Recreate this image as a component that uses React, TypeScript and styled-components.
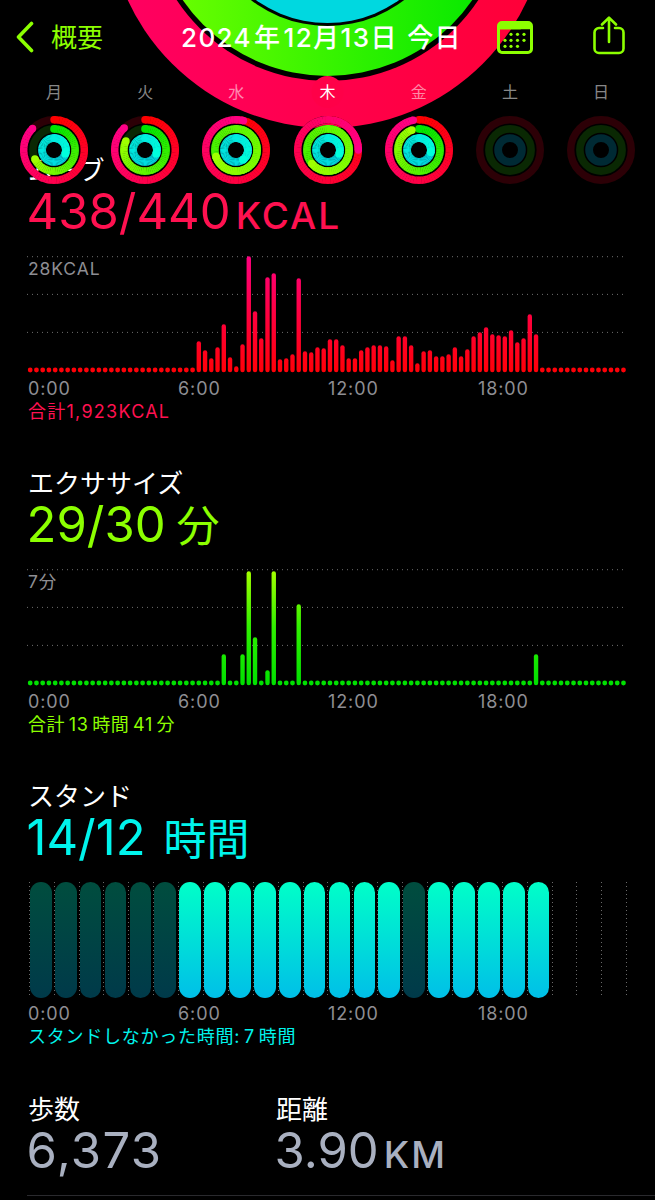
import React from "react";
import styled, { createGlobalStyle } from "styled-components";

const FONT = `Inter, "Noto Sans CJK JP", "Liberation Sans", sans-serif`;
const LIME = "#8cff00";

const Global = createGlobalStyle`
  html, body { margin: 0; padding: 0; background: #000; }
  body { font-family: ${FONT}; color: #fff; }
`;

const Page = styled.div`
  position: relative;
  width: 655px;
  height: 1200px;
  overflow: hidden;
  background: #000;
`;
const Backdrop = styled.svg`
  position: absolute;
  top: 0;
  left: 0;
`;
const Header = styled.header`
  position: relative;
  display: flex;
  align-items: center;
  height: 74px;
`;
const BackLink = styled.div`
  display: flex;
  align-items: center;
  width: 181px;
  padding-left: 16px;
  box-sizing: border-box;
  gap: 17px;
  color: ${LIME};
  font-size: 26px;
`;
const BackLabel = styled.span`
  padding-bottom: 4px;
`;
const Title = styled.div`
  width: 316px;
  padding-bottom: 4px;
  font-size: 26px;
  font-weight: 500;
  letter-spacing: 1.4px;
  white-space: nowrap;
`;
const Gap = styled.span`
  display: inline-block;
  width: ${(p: { $w: number }) => p.$w}px;
`;
const HeaderIcons = styled.div`
  display: flex;
  align-items: center;
  gap: 60px;
`;
const DayRow = styled.div`
  position: relative;
  display: grid;
  grid-template-columns: repeat(7, 91.2px);
  padding-left: 8.4px;
  height: 34px;
  align-items: center;
`;
const Day = styled.div<{ $active?: boolean }>`
  text-align: center;
  font-size: 16px;
  color: ${(p) => (p.$active ? "#fff" : "rgba(255,255,255,0.55)")};
`;
const RingRow = styled.div`
  position: relative;
  z-index: 2;
  display: grid;
  grid-template-columns: repeat(7, 91.2px);
  justify-items: center;
  padding-left: 8.4px;
  margin-top: 8px;
  margin-bottom: -29px;
`;
const Section = styled.section`
  position: relative;
  height: 313px;
  padding-left: 28px;
  box-sizing: border-box;
`;
const SectionTitle = styled.div`
  font-size: 26px;
  line-height: 32px;
  height: 32px;
  white-space: nowrap;
`;
const Value = styled.div<{ $color: string }>`
  color: ${(p) => p.$color};
  font-size: 49px;
  line-height: 50px;
  height: 50px;
  margin-left: -1.5px;
  white-space: nowrap;
`;
const Unit = styled.span`
  font-size: 37px;
  font-weight: 500;
  letter-spacing: 2px;
  margin-left: 5px;
`;
const JpUnit = styled.span<{ $gap: number }>`
  font-size: 43px;
  margin-left: ${(p) => p.$gap}px;
`;
const ChartWrap = styled.div`
  position: relative;
  margin-top: 19px;
  height: 122px;
`;
const ChartSvg = styled.svg`
  display: block;
  overflow: visible;
`;
const ScaleLabel = styled.div`
  position: absolute;
  left: 0;
  top: 2px;
  font-size: 17.5px;
  line-height: 22px;
  letter-spacing: 0.9px;
  color: #8e8e93;
`;
const Axis = styled.div`
  display: grid;
  grid-template-columns: repeat(4, 150px);
  font-size: 18px;
  line-height: 22px;
  letter-spacing: 0.9px;
  color: #8e8e93;
`;
const Total = styled.div<{ $color: string; $ls: number }>`
  font-size: 18px;
  line-height: 24px;
  letter-spacing: ${(p) => p.$ls}px;
  word-spacing: -2px;
  color: ${(p) => p.$color};
  white-space: nowrap;
`;
const StandGrid = styled.div`
  display: grid;
  grid-template-columns: repeat(24, 24.9px) 1px;
  height: 116px;
  margin-left: 0.8px;
`;
const StandCell = styled.div`
  background-image: linear-gradient(#6a6a6a 1px, transparent 1px);
  background-size: 1px 4px;
  background-repeat: repeat-y;
  padding-left: 1.2px;
`;
const StandBar = styled.div<{ $on: boolean }>`
  width: 21.7px;
  height: 116px;
  border-radius: 11px;
  background: ${(p) =>
    p.$on
      ? "linear-gradient(#00ffc8, #00bfe8)"
      : "linear-gradient(#004d3e, #003a4a)"};
`;
const StandWrap = styled.div`
  margin-top: 19px;
  height: 121px;
`;
const Stats = styled.div`
  display: grid;
  grid-template-columns: 248px 1fr;
  padding-left: 28px;
  height: 101px;
  box-sizing: border-box;
`;
const StatValue = styled.div`
  color: #a9b0c0;
  font-size: 49px;
  line-height: 50px;
  margin-left: -1.5px;
  white-space: nowrap;
`;
const Count = styled.span`
  letter-spacing: 1.4px;
`;
const StatsLine = styled.div`
  margin-left: 27px;
  height: 1px;
  background: #2a2a2e;
`;

function hex(c: string) {
  return [1, 3, 5].map((i) => parseInt(c.slice(i, i + 2), 16));
}
function mix(a: string, b: string, t: number) {
  const x = hex(a), y = hex(b);
  const v = x.map((n, i) => Math.round(n + (y[i] - n) * t));
  return `rgb(${v[0]},${v[1]},${v[2]})`;
}
function pt(r: number, deg: number) {
  const a = (deg * Math.PI) / 180;
  return [34 + r * Math.sin(a), 34 - r * Math.cos(a)];
}

function Arc({ r, w, frac, from, to, track }: { r: number; w: number; frac: number; from: string; to: string; track: string }) {
  const total = frac * 360;
  const segs: React.ReactNode[] = [];
  const step = 5;
  for (let d = 0; d < total; d += step) {
    const e = Math.min(d + step + 0.6, total);
    const [x1, y1] = pt(r, d);
    const [x2, y2] = pt(r, e);
    segs.push(
      <path key={d} d={`M${x1} ${y1}A${r} ${r} 0 0 1 ${x2} ${y2}`} fill="none" stroke={mix(from, to, d / total)} strokeWidth={w} />
    );
  }
  const [sx, sy] = pt(r, 0);
  const [ex, ey] = pt(r, total);
  return (
    <>
      <circle cx={34} cy={34} r={r} fill="none" stroke={track} strokeWidth={w} />
      {frac > 0 && <circle cx={sx} cy={sy} r={w / 2} fill={from} />}
      {segs}
      {frac > 0 && <circle cx={ex} cy={ey} r={w / 2} fill={to} />}
    </>
  );
}

function Ring({ red, green, cyan }: { red: number; green: number; cyan: number }) {
  return (
    <svg width={68} height={68} viewBox="0 0 68 68">
      <Arc r={30.3} w={7.4} frac={red} from="#ff0000" to="#ff0088" track="#2c0006" />
      <Arc r={21.1} w={7.6} frac={green} from="#00e800" to="#a0ff00" track="#0a2803" />
      <Arc r={11.9} w={7.8} frac={cyan} from="#00c8e4" to="#00ffdc" track="#002a34" />
    </svg>
  );
}

const rings = [
  { d: "月", red: 0.875, green: 0.68, cyan: 1.3 },
  { d: "火", red: 0.88, green: 0.82, cyan: 1.3 },
  { d: "水", red: 1.04, green: 1.7, cyan: 1.4 },
  { d: "木", red: 1.25, green: 1.64, cyan: 1.3, active: true },
  { d: "金", red: 0.97, green: 0.945, cyan: 1.28 },
  { d: "土", red: 0, green: 0, cyan: 0 },
  { d: "日", red: 0, green: 0, cyan: 0 },
];

const redBars: Record<number, number> = {
  27: 31, 28: 22, 29: 14, 30: 25, 31: 48, 32: 15, 33: 6, 34: 28, 35: 116, 36: 61, 37: 34, 38: 95, 39: 99,
  40: 13, 41: 14, 42: 18, 43: 94, 44: 21, 45: 20, 46: 25, 47: 24, 48: 33, 49: 33, 50: 27, 51: 14, 52: 14,
  53: 22, 54: 25, 55: 27, 56: 27, 57: 26, 58: 12, 59: 36, 60: 36, 61: 27, 62: 9, 63: 21, 64: 22, 65: 16,
  66: 16, 67: 18, 68: 25, 69: 16, 70: 23, 71: 36, 72: 40, 73: 45, 74: 38, 75: 37, 76: 36, 77: 42, 78: 30,
  79: 34, 80: 58, 81: 38,
};
const greenBars: Record<number, number> = { 31: 31, 34: 31, 35: 114, 36: 48, 38: 15, 39: 114, 43: 81, 81: 31 };

function Chart({ id, bars, stops }: { id: string; bars: Record<number, number>; stops: string[] }) {
  const items = Array.from({ length: 96 }, (_, i) => i);
  return (
    <ChartSvg width={600} height={120} viewBox="0 0 600 120">
      <defs>
        <linearGradient id={id} gradientUnits="userSpaceOnUse" x1="0" y1="0" x2="0" y2="116">
          <stop offset="0" stopColor={stops[0]} />
          <stop offset="0.5" stopColor={stops[1]} />
          <stop offset="1" stopColor={stops[2]} />
        </linearGradient>
      </defs>
      {[0.7, 38.4, 76.4].map((y) => (
        <line key={y} x1={-1} x2={599} y1={y} y2={y} stroke="#6e6e6e" strokeWidth={1} strokeDasharray="1 4" />
      ))}
      {items.map((i) => {
        const x = 2.2 + 6.245 * i;
        const h = bars[i];
        return h ? (
          <rect key={i} x={x - 2.2} y={116.3 - h} width={4.4} height={h} rx={2.2} fill={`url(#${id})`} />
        ) : (
          <circle key={i} cx={x} cy={114} r={2.4} fill={stops[2]} />
        );
      })}
    </ChartSvg>
  );
}

function AxisLabels() {
  return (
    <Axis>
      <span>0:00</span>
      <span>6:00</span>
      <span>12:00</span>
      <span>18:00</span>
    </Axis>
  );
}

const dimHours = [0, 1, 2, 3, 4, 5, 15];

export default function App() {
  return (
    <Page>
      <Global />
      <Backdrop width={655} height={135} viewBox="0 0 655 135">
        <defs>
          <linearGradient id="bigRed" x1="0" x2="1" y1="0" y2="0">
            <stop offset="0" stopColor="#ff0062" />
            <stop offset="1" stopColor="#ff0036" />
          </linearGradient>
          <linearGradient id="bigGreen" x1="0" x2="1" y1="0" y2="0">
            <stop offset="0" stopColor="#70ff00" />
            <stop offset="1" stopColor="#00e800" />
          </linearGradient>
        </defs>
        <circle cx={327.5} cy={-92} r={220} fill="url(#bigRed)" />
        <circle cx={327.5} cy={-100} r={181} fill="#000" />
        <circle cx={327.5} cy={-100} r={176} fill="url(#bigGreen)" />
        <circle cx={327.5} cy={-100} r={126} fill="#000" />
        <circle cx={327.5} cy={-100} r={123} fill="#00d8e0" />
        <circle cx={327.5} cy={92} r={16} fill="#ff0048" />
      </Backdrop>
      <Header>
        <BackLink>
          <svg width={18} height={32} viewBox="0 0 18 32">
            <path d="M15.5 2.5 2.5 16l13 13.5" fill="none" stroke={LIME} strokeWidth={3.6} strokeLinecap="round" strokeLinejoin="round" />
          </svg>
          <BackLabel>概要</BackLabel>
        </BackLink>
        <Title>
          2024<Gap $w={2} />年<Gap $w={2} />12月13日<Gap $w={1} /> 今日
        </Title>
        <HeaderIcons>
          <svg width={36} height={33} viewBox="0 0 36 33">
            <path
              fillRule="evenodd"
              fill={LIME}
              d="M5 0h26a5 5 0 0 1 5 5v23a5 5 0 0 1-5 5H5a5 5 0 0 1-5-5V5a5 5 0 0 1 5-5ZM3 8.5V27a3 3 0 0 0 3 3h24a3 3 0 0 0 3-3V8.5Z"
            />
            <path d="M33 8.5V27a3 3 0 0 1-3 3H6a3 3 0 0 1-2.4-1.2L24 8.5Z" fill="#000" />
            {[
              [14, 13.3], [20.5, 13.3], [27, 13.3],
              [8, 19.3], [14, 19.3], [20.5, 19.3], [27, 19.3],
              [8, 25.3], [14, 25.3], [20.5, 25.3],
            ].map(([x, y]) => (
              <circle key={`${x}-${y}`} cx={x} cy={y} r={1.6} fill={LIME} />
            ))}
          </svg>
          <svg width={32} height={39} viewBox="0 0 32 39" style={{ marginTop: -3 }}>
            <path
              d="M10 12H6a4.5 4.5 0 0 0-4.5 4.5v16A4.5 4.5 0 0 0 6 37h20a4.5 4.5 0 0 0 4.5-4.5v-16A4.5 4.5 0 0 0 26 12h-4"
              fill="none"
              stroke={LIME}
              strokeWidth={2.6}
              strokeLinecap="round"
            />
            <path d="M16 26V2M9 8.5 16 1.6l7 6.9" fill="none" stroke={LIME} strokeWidth={2.6} strokeLinecap="round" strokeLinejoin="round" />
          </svg>
        </HeaderIcons>
      </Header>
      <DayRow>
        {rings.map((r) => (
          <Day key={r.d} $active={r.active}>{r.d}</Day>
        ))}
      </DayRow>
      <RingRow>
        {rings.map((r) => (
          <Ring key={r.d} red={r.red} green={r.green} cyan={r.cyan} />
        ))}
      </RingRow>

      <Section>
        <SectionTitle>ムーブ</SectionTitle>
        <Value $color="#ff1150">438/440<Unit>KCAL</Unit></Value>
        <ChartWrap>
          <Chart id="redGrad" bars={redBars} stops={["#ff0080", "#ff0040", "#ff0008"]} />
          <ScaleLabel>28KCAL</ScaleLabel>
        </ChartWrap>
        <AxisLabels />
        <Total $color="#ff1150" $ls={1.25}>合計1,923KCAL</Total>
      </Section>

      <Section>
        <SectionTitle>エクササイズ</SectionTitle>
        <Value $color={LIME}>29/30<JpUnit $gap={11}>分</JpUnit></Value>
        <ChartWrap>
          <Chart id="greenGrad" bars={greenBars} stops={["#a8ff00", "#30f000", "#00e000"]} />
          <ScaleLabel>7分</ScaleLabel>
        </ChartWrap>
        <AxisLabels />
        <Total $color={LIME} $ls={0.6}>合計 13 時間 41 分</Total>
      </Section>

      <Section>
        <SectionTitle>スタンド</SectionTitle>
        <Value $color="#00f4ec">14/12<JpUnit $gap={18}>時間</JpUnit></Value>
        <StandWrap>
          <StandGrid>
            {Array.from({ length: 25 }, (_, i) => (
              <StandCell key={i}>
                {i < 21 && <StandBar $on={!dimHours.includes(i)} />}
              </StandCell>
            ))}
          </StandGrid>
        </StandWrap>
        <AxisLabels />
        <Total $color="#00f4ec" $ls={0.75}>スタンドしなかった時間: 7 時間</Total>
      </Section>

      <Stats>
        <div>
          <SectionTitle>歩数</SectionTitle>
          <StatValue><Count>6,373</Count></StatValue>
        </div>
        <div>
          <SectionTitle>距離</SectionTitle>
          <StatValue>3.90<Unit>KM</Unit></StatValue>
        </div>
      </Stats>
      <StatsLine />
    </Page>
  );
}
